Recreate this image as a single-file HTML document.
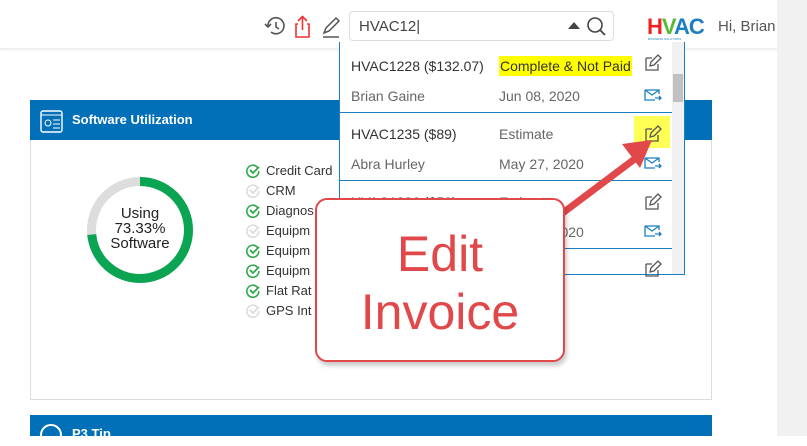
<!DOCTYPE html><html><head><style>
body{margin:0;width:807px;height:436px;overflow:hidden;background:#fff;font-family:"Liberation Sans",sans-serif;position:relative}
.a{position:absolute}
.t{font-size:14px;color:#333}
.g{color:#666}
.li{height:20px;display:flex;align-items:center}
.li svg{margin-right:5px}
</style></head><body>
<div class="a" style="left:0;top:0;width:777px;height:48px;background:#fff;border-bottom:1px solid #eee;box-shadow:0 1px 3px #eee"></div>
<div class="a" style="left:777px;top:0;width:30px;height:436px;background:#f1f1f1"></div>
<svg class="a" style="left:263px;top:14px" width="90" height="26" viewBox="0 0 90 26">
<path d="M5 12a8 8 0 1 1 3 6" fill="none" stroke="#555" stroke-width="1.6"/><path d="M2 10l3 3 3-3" fill="none" stroke="#555" stroke-width="1.6"/><path d="M13 8v5l3 2" fill="none" stroke="#555" stroke-width="1.6"/>
<path d="M35 10h-2v13h13v-13h-2" fill="none" stroke="#e33" stroke-width="1.6"/><path d="M39.5 16V3M35 7l4.5-4.5L44 7" fill="none" stroke="#e33" stroke-width="1.6"/>
<path d="M61 19l2-5 10-10 3 3-10 10z" fill="none" stroke="#555" stroke-width="1.5"/><path d="M60 23h16" stroke="#555" stroke-width="1.5"/>
</svg>
<div class="a" style="left:349px;top:11px;width:263px;height:28px;border:1px solid #ddd;border-radius:4px"></div>
<div class="a t" style="left:359px;top:18px;font-size:15px;color:#444">HVAC12|</div>
<svg class="a" style="left:565px;top:16px" width="45" height="22"><path d="M3 13l6-7 6 7z" fill="#444"/><circle cx="30" cy="9" r="7" fill="none" stroke="#444" stroke-width="1.6"/><path d="M35 14l5 5" stroke="#444" stroke-width="1.8"/></svg>
<div class="a" style="left:647px;top:14px;font-weight:bold;font-size:22px;letter-spacing:-1px"><span style="color:#e22">H</span><span style="color:#5b3">V</span><span style="color:#1a7fc1">AC</span></div>
<div class="a" style="left:648px;top:37px;font-size:3px;color:#1a7fc1">BUSINESS SOLUTIONS</div>
<div class="a" style="left:718px;top:18px;font-size:15px;color:#555">Hi, Brian</div>
<div class="a" style="left:30px;top:100px;width:680px;height:298px;border:1px solid #ddd"></div>
<div class="a" style="left:30px;top:100px;width:682px;height:40px;background:#0270b9"></div>
<svg class="a" style="left:40px;top:110px" width="23" height="23"><rect x="1" y="1" width="21" height="21" rx="2" fill="none" stroke="#fff" stroke-width="1.4"/><path d="M1 5h21" stroke="#fff"/><circle cx="8" cy="13" r="3" fill="none" stroke="#fff"/><path d="M13 10h7M13 14h7M13 18h7" stroke="#fff"/></svg>
<div class="a" style="left:72px;top:112px;color:#fff;font-weight:bold;font-size:13px">Software Utilization</div>
<svg class="a" style="left:86px;top:176px" width="108" height="108"><circle cx="54" cy="54" r="48.5" fill="none" stroke="#ddd" stroke-width="9"/><circle cx="54" cy="54" r="48.5" fill="none" stroke="#0aa452" stroke-width="9" stroke-dasharray="223.5 305" transform="rotate(-90 54 54)"/></svg>
<div class="a" style="left:95px;top:206px;width:90px;text-align:center;font-size:15px;line-height:15px;color:#222">Using<br>73.33%<br>Software</div>
<svg width="0" height="0" style="position:absolute"><defs>
<g id="ck"><path d="M11.5 4.5A6 6 0 1 0 12.8 8" fill="none" stroke-width="1.6"/><path d="M4 7l3 3 6-6" fill="none" stroke-width="1.8"/></g></defs></svg>
<div class="a" style="left:246px;top:160px;font-size:13px;color:#333">
<div class="li"><svg width="15" height="15" stroke="#2ea84a"><use href="#ck"/></svg>Credit Card</div>
<div class="li"><svg width="15" height="15" stroke="#ddd"><use href="#ck"/></svg>CRM</div>
<div class="li"><svg width="15" height="15" stroke="#2ea84a"><use href="#ck"/></svg>Diagnos</div>
<div class="li"><svg width="15" height="15" stroke="#ddd"><use href="#ck"/></svg>Equipm</div>
<div class="li"><svg width="15" height="15" stroke="#2ea84a"><use href="#ck"/></svg>Equipm</div>
<div class="li"><svg width="15" height="15" stroke="#2ea84a"><use href="#ck"/></svg>Equipm</div>
<div class="li"><svg width="15" height="15" stroke="#2ea84a"><use href="#ck"/></svg>Flat Rat</div>
<div class="li"><svg width="15" height="15" stroke="#ddd"><use href="#ck"/></svg>GPS Int</div></div>
<div class="a" style="left:30px;top:415px;width:682px;height:21px;background:#0270b9"></div>
<div class="a" style="left:40px;top:424px;width:18px;height:18px;border:2px solid #fff;border-radius:50%"></div>
<div class="a" style="left:72px;top:426px;color:#fff;font-weight:bold;font-size:13px">P3 Tip</div>
<div class="a" style="left:339px;top:42px;width:344px;height:232px;background:#fff;border:1px solid #1a7fc1;border-top:none;overflow:hidden">
<div class="a" style="right:0;top:0;width:12px;height:232px;background:#f1f1f1"></div>
<div class="a" style="right:1px;top:32px;width:10px;height:28px;background:#c1c1c1"></div>
<div class="a" style="left:0;top:70px;width:332px;border-top:1px solid #1a7fc1"></div>
<div class="a" style="left:0;top:138px;width:332px;border-top:1px solid #1a7fc1"></div>
<div class="a" style="left:0;top:206px;width:332px;border-top:1px solid #1a7fc1"></div>
<div class="a t" style="left:11px;top:16px">HVAC1228 ($132.07)</div>
<div class="a t" style="left:159px;top:14px;background:#ff0;padding:2px 1px">Complete &amp; Not Paid</div>
<div class="a t g" style="left:11px;top:46px">Brian Gaine</div><div class="a t g" style="left:159px;top:46px">Jun 08, 2020</div>
<div class="a t" style="left:11px;top:84px">HVAC1235 ($89)</div><div class="a t g" style="left:159px;top:84px">Estimate</div>
<div class="a t g" style="left:11px;top:114px">Abra Hurley</div><div class="a t g" style="left:159px;top:114px">May 27, 2020</div>
<div class="a t" style="left:11px;top:152px">HVAC1236 ($50)</div><div class="a t g" style="left:159px;top:152px">Estimate</div>
<div class="a t g" style="left:159px;top:182px">May 27, 2020</div>
<div class="a" style="left:294px;top:74px;width:36px;height:32px;background:#ff5"></div>
</div>
<svg class="a" style="left:640px;top:50px" width="30" height="230">
<g fill="none" stroke="#555" stroke-width="1.3"><path d="M6 8h6M6 8v12h12v-6M10 16l1-4 7-7 3 3-7 7z"/><path d="M6 79h6M6 79v12h12v-6M10 87l1-4 7-7 3 3-7 7z"/><path d="M6 147h6M6 147v12h12v-6M10 155l1-4 7-7 3 3-7 7z"/><path d="M6 214h6M6 214v12h12v-6M10 222l1-4 7-7 3 3-7 7z"/></g>
<g fill="none" stroke="#1a7fc1" stroke-width="1.3"><path d="M5 40h14v4M5 40v10h10M5 40l7 5 7-5M15 48h6M19 46l2 2-2 2"/><path d="M5 108h14v4M5 108v10h10M5 108l7 5 7-5M15 116h6M19 114l2 2-2 2"/><path d="M5 176h14v4M5 176v10h10M5 176l7 5 7-5M15 184h6M19 182l2 2-2 2"/></g></svg>
<svg class="a" style="left:540px;top:120px" width="120" height="110"><path d="M20 95L100 35" stroke="#e0484a" stroke-width="7"/><path d="M112 20L82 24L100 48z" fill="#e0484a"/></svg>
<div class="a" style="left:315px;top:198px;width:250px;height:164px;border:2px solid #e0484a;border-radius:12px;background:#fff;box-shadow:2px 4px 4px rgba(0,0,0,.2);text-align:center;color:#e0484a;font-size:50px;line-height:58px;padding-top:25px;box-sizing:border-box">Edit<br>Invoice</div>
</body></html>
